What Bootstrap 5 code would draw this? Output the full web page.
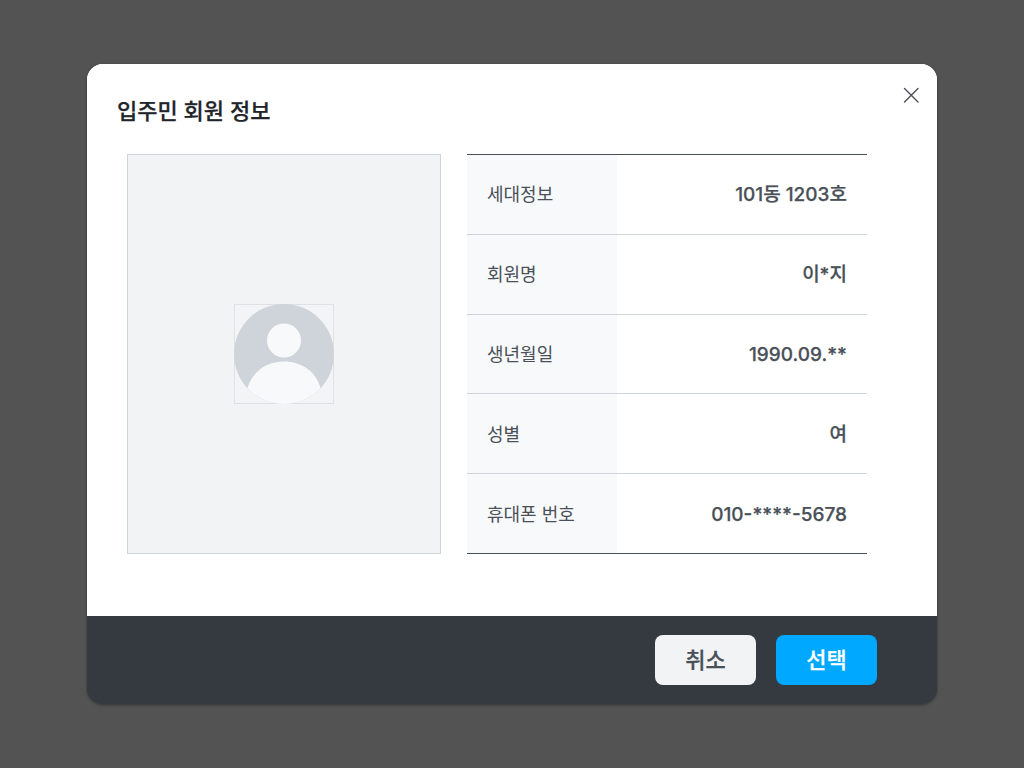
<!DOCTYPE html>
<html lang="ko">
<head>
<meta charset="utf-8">
<meta name="viewport" content="width=device-width, initial-scale=1">
<title>입주민 회원 정보</title>
<link href="https://cdn.jsdelivr.net/npm/bootstrap@5.3.0/dist/css/bootstrap.min.css" rel="stylesheet">
<style>
  body { background: #535353; font-family: Inter, "Noto Sans CJK KR", sans-serif; color: #495057; }
  .member-dialog { max-width: 850px; border-radius: 16px; background: linear-gradient(#fff 50%, #343a40 50%); box-shadow: 0 1px 3px rgba(0, 0, 0, .4); }
  .dialog-head { padding: 30px 15px 26px 30px; background: #fff; border-radius: 16px 16px 0 0; }
  .dialog-title { font-size: 22px; line-height: 34px; color: #212529; }
  .dialog-title, .foot-btn, .info-table td { font-weight: 500; -webkit-text-stroke: .25px currentColor; }
  .close-btn { width: 20px; height: 20px; margin-top: -9px; color: #495057; }
  .dialog-main { padding: 0 70px 62px 40px; gap: 26px; background: #fff; }
  .photo-box { flex: 1 1 0; min-height: 400px; background: #f1f3f5; border: 1px solid #ced4da; }
  .info-wrap { flex: 0 1 400px; }
  .info-table { height: 400px; font-size: 18px; line-height: 28px; border-top: 1px solid #495057; border-bottom: 1px solid #495057; color: #495057; }
  .info-table tr + tr > * { border-top: 1px solid #ced4da; }
  .info-table th, .info-table td { padding: 2px 20px 0; }
  .info-table th { width: 150px; font-weight: 400; background: #f8f9fb; }
  .info-table td { font-size: 19px; }
  .dialog-foot { padding: 19px 60px; gap: 20px; background: #343a40; border-radius: 0 0 16px 16px; }
  .foot-btn { width: 101px; height: 50px; padding: 0; border: 0; border-radius: 8px; font-size: 22px; line-height: 34px; }
  .cancel-btn, .cancel-btn:hover { background: #f1f3f5; color: #495057; }
  .select-btn, .select-btn:hover { background: #00a8ff; color: #fff; }
  @media (max-width: 700px) {
    .dialog-main { flex-direction: column; padding: 0 20px 40px; }
    .photo-box, .info-wrap { flex: none; }
  }
</style>
</head>
<body>
<main class="min-vh-100 d-flex align-items-center justify-content-center">
  <section class="member-dialog w-100" role="dialog" aria-labelledby="dialogTitle">
    <header class="dialog-head d-flex justify-content-between align-items-start">
      <h1 class="dialog-title mb-0" id="dialogTitle">입주민 회원 정보</h1>
      <button type="button" class="close-btn btn p-0 border-0 d-flex" aria-label="닫기">
        <svg width="20" height="20" viewBox="0 0 20 20" fill="none" stroke="currentColor" stroke-width="1.4" stroke-linecap="round" aria-hidden="true"><path d="M2.500 3.500 16 17M16 3.500 2.500 17"/></svg>
      </button>
    </header>
    <div class="dialog-main d-flex">
      <div class="photo-box d-flex align-items-center justify-content-center">
        <svg width="100" height="100" viewBox="0 0 100 100" role="img" aria-label="회원 사진">
          <defs><clipPath id="round"><circle cx="50" cy="50" r="50"/></clipPath></defs>
          <rect x=".5" y=".5" width="99" height="99" fill="#f3f4f6" stroke="#dfe1e4"/>
          <g clip-path="url(#round)">
            <rect width="100" height="100" fill="#ced4da"/>
            <circle cx="50" cy="36.500" r="17" fill="#f8f9fb"/>
            <path d="M13.500 84C18 68 32 57.500 50 57.500S82 68 86.500 84V100H13.500Z" fill="#f8f9fb"/>
          </g>
        </svg>
      </div>
      <div class="info-wrap">
        <table class="info-table w-100">
          <tbody>
            <tr><th scope="row">세대정보</th><td class="text-end">101동 1203호</td></tr>
            <tr><th scope="row">회원명</th><td class="text-end">이*지</td></tr>
            <tr><th scope="row">생년월일</th><td class="text-end">1990.09.**</td></tr>
            <tr><th scope="row">성별</th><td class="text-end">여</td></tr>
            <tr><th scope="row">휴대폰 번호</th><td class="text-end">010-****-5678</td></tr>
          </tbody>
        </table>
      </div>
    </div>
    <footer class="dialog-foot d-flex justify-content-end">
      <button type="button" class="btn foot-btn cancel-btn">취소</button>
      <button type="button" class="btn foot-btn select-btn">선택</button>
    </footer>
  </section>
</main>
<script src="https://cdn.jsdelivr.net/npm/bootstrap@5.3.0/dist/js/bootstrap.bundle.min.js"></script>
</body>
</html>
